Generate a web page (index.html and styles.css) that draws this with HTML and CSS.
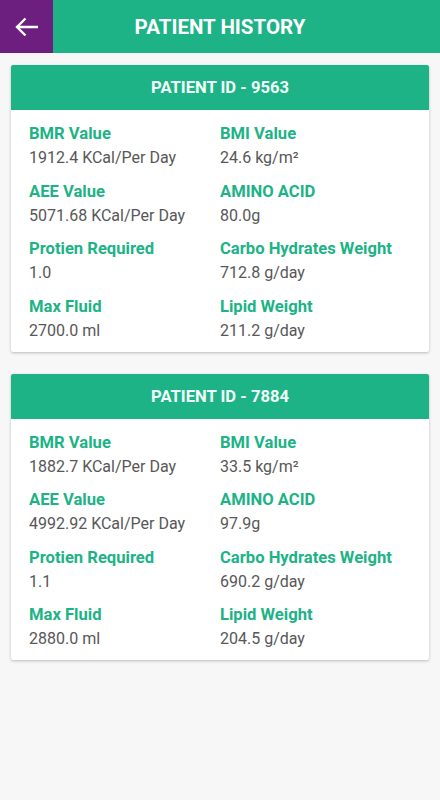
FILE: index.html
```html
<!DOCTYPE html>
<html lang="en">

<head>
    <meta charset="UTF-8">
    <meta name="viewport" content="width=device-width, initial-scale=1.0">
    <title>Patient History</title>
    <link rel="stylesheet" href="styles.css">
</head>

<body>

    <div class="toolbar">
        <button class="back-btn" aria-label="Back">
            <svg width="24" height="20" viewBox="0 0 24 20">
                <path d="M23 10H2M10.5 1.5L2 10l8.5 8.5" fill="none" stroke="#fff" stroke-width="2.4" />
            </svg>
        </button>
        <h1>PATIENT HISTORY</h1>
    </div>

    <div class="history-list">

        <div class="patient-card">
            <div class="card-header">PATIENT ID - 9563</div>
            <div class="card-body">
                <div class="field">
                    <div class="label">BMR Value</div>
                    <div class="value">1912.4 KCal/Per Day</div>
                </div>
                <div class="field">
                    <div class="label">BMI Value</div>
                    <div class="value">24.6 kg/m²</div>
                </div>
                <div class="field">
                    <div class="label">AEE Value</div>
                    <div class="value">5071.68 KCal/Per Day</div>
                </div>
                <div class="field">
                    <div class="label">AMINO ACID</div>
                    <div class="value">80.0g</div>
                </div>
                <div class="field">
                    <div class="label">Protien Required</div>
                    <div class="value">1.0</div>
                </div>
                <div class="field">
                    <div class="label">Carbo Hydrates Weight</div>
                    <div class="value">712.8 g/day</div>
                </div>
                <div class="field">
                    <div class="label">Max Fluid</div>
                    <div class="value">2700.0 ml</div>
                </div>
                <div class="field">
                    <div class="label">Lipid Weight</div>
                    <div class="value">211.2 g/day</div>
                </div>
            </div>
        </div>

        <div class="patient-card">
            <div class="card-header">PATIENT ID - 7884</div>
            <div class="card-body">
                <div class="field">
                    <div class="label">BMR Value</div>
                    <div class="value">1882.7 KCal/Per Day</div>
                </div>
                <div class="field">
                    <div class="label">BMI Value</div>
                    <div class="value">33.5 kg/m²</div>
                </div>
                <div class="field">
                    <div class="label">AEE Value</div>
                    <div class="value">4992.92 KCal/Per Day</div>
                </div>
                <div class="field">
                    <div class="label">AMINO ACID</div>
                    <div class="value">97.9g</div>
                </div>
                <div class="field">
                    <div class="label">Protien Required</div>
                    <div class="value">1.1</div>
                </div>
                <div class="field">
                    <div class="label">Carbo Hydrates Weight</div>
                    <div class="value">690.2 g/day</div>
                </div>
                <div class="field">
                    <div class="label">Max Fluid</div>
                    <div class="value">2880.0 ml</div>
                </div>
                <div class="field">
                    <div class="label">Lipid Weight</div>
                    <div class="value">204.5 g/day</div>
                </div>
            </div>
        </div>

    </div>

</body>

</html>
```

FILE: styles.css
```css
body {
    font-family: Roboto, "Noto Sans", sans-serif;
    background-color: #f7f7f7;
    margin: 0;
}

.toolbar {
    display: flex;
    align-items: center;
    height: 53px;
    background-color: #1db386;
}

.back-btn {
    width: 53px;
    height: 53px;
    background-color: #6d1f80;
    border: none;
    padding: 0;
    display: flex;
    align-items: center;
    justify-content: center;
    cursor: pointer;
}

.toolbar h1 {
    flex: 1;
    margin: 0 53px 0 0;
    text-align: center;
    color: #fff;
    font-size: 20.5px;
    font-weight: bold;
}

.history-list {
    padding: 12px 11px;
    display: flex;
    flex-direction: column;
    gap: 22px;
}

.patient-card {
    background-color: #fff;
    border-radius: 2px;
    box-shadow: 0 1px 3px rgba(0, 0, 0, 0.25);
    overflow: hidden;
}

.card-header {
    height: 45px;
    background-color: #1db386;
    color: #f2fffa;
    font-size: 16.6px;
    font-weight: bold;
    display: flex;
    align-items: center;
    justify-content: center;
}

.card-body {
    display: grid;
    grid-template-columns: 1fr 1fr;
    row-gap: 11.5px;
    padding: 13px 18px 10px;
}

.field .label {
    color: #1db386;
    font-size: 16.6px;
    font-weight: bold;
    line-height: 22px;
}

.field .value {
    color: #575757;
    font-size: 16px;
    line-height: 22px;
    margin-top: 2px;
}
```
